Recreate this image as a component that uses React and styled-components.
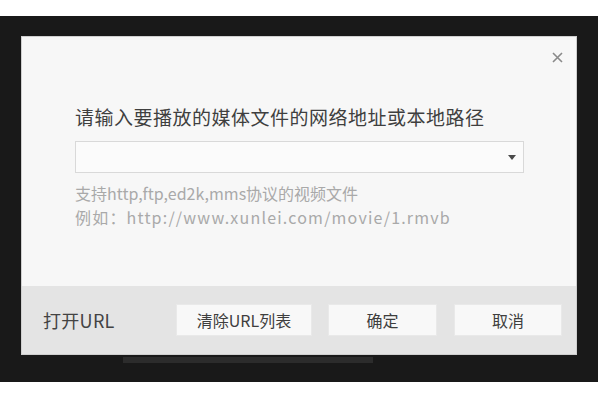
import React from "react";
import styled, { createGlobalStyle } from "styled-components";

const Global = createGlobalStyle`
  html, body { margin: 0; padding: 0; background: #ffffff; }
  body { font-family: "Noto Sans CJK SC", "Noto Sans", sans-serif; }
`;

const Page = styled.div`
  width: 600px;
  height: 400px;
  padding-top: 16px;
  box-sizing: border-box;
`;

const Frame = styled.div`
  width: 598px;
  height: 366px;
  background: #191919;
  box-sizing: border-box;
  padding: 20px 0 0 21px;
  display: flex;
  flex-direction: column;
`;

const Dialog = styled.div`
  width: 556px;
  height: 319px;
  background: #f7f7f7;
  border: 1px solid #cfcfcf;
  box-sizing: border-box;
  display: flex;
  flex-direction: column;
`;

const Body = styled.div`
  flex: 1;
  display: flex;
  flex-direction: column;
  padding: 0 52px 0 53px;
  position: relative;
`;

const Close = styled.button`
  position: absolute;
  top: 14px;
  right: 13px;
  width: 12px;
  height: 12px;
  padding: 0;
  border: 0;
  background: none;
  display: flex;
  align-items: center;
  justify-content: center;
`;

const Title = styled.div`
  margin-top: 67px;
  font-size: 19px;
  letter-spacing: 0.5px;
  line-height: 26px;
  color: #3f3f3f;
  white-space: nowrap;
`;

const Combo = styled.div`
  margin-top: 11px;
  height: 32px;
  background: #fbfbfb;
  border: 1px solid #d9d9d9;
  box-sizing: border-box;
  display: flex;
  align-items: center;
  justify-content: flex-end;
  padding-right: 7px;
`;

const Hints = styled.div`
  margin-top: 8px;
  font-size: 16px;
  line-height: 24px;
  color: #a9a9a9;
  white-space: nowrap;
`;

const HintLine = styled.div`
  letter-spacing: ${(p) => p.$ls || "0px"};
`;

const Footer = styled.div`
  height: 68px;
  background: #e4e4e4;
  display: flex;
  align-items: center;
  padding: 0 14px 0 21px;
  box-sizing: border-box;
`;

const Label = styled.div`
  font-size: 18px;
  color: #434343;
  flex: 1;
  letter-spacing: 0.3px;
`;

const Button = styled.button`
  width: ${(p) => p.$w}px;
  height: 32px;
  margin-left: ${(p) => p.$ml}px;
  background: #f8f8f8;
  border: 1px solid #e9e9e9;
  font-family: "Noto Sans CJK SC", "Noto Sans", sans-serif;
  font-size: 16px;
  color: #3e3e3e;
  padding: 0;
`;

const Taskbar = styled.div`
  width: 250px;
  height: 6px;
  margin: 2px 0 0 102px;
  background: #2c2c2c;
`;

export default function App() {
  return (
    <>
      <Global />
      <Page>
        <Frame>
          <Dialog>
            <Body>
              <Close aria-label="close">
                <svg width="11" height="11" viewBox="0 0 11 11">
                  <path d="M1 1 L10 10 M10 1 L1 10" stroke="#8a8a8a" strokeWidth="1.6" />
                </svg>
              </Close>
              <Title>请输入要播放的媒体文件的网络地址或本地路径</Title>
              <Combo>
                <svg width="8" height="5" viewBox="0 0 8 5">
                  <path d="M0 0 L8 0 L4 5 Z" fill="#4a4a4a" />
                </svg>
              </Combo>
              <Hints>
                <HintLine $ls="0px">支持http,ftp,ed2k,mms协议的视频文件</HintLine>
                <HintLine $ls="1.2px">例如：http://www.xunlei.com/movie/1.rmvb</HintLine>
              </Hints>
            </Body>
            <Footer>
              <Label>打开URL</Label>
              <Button $w={136} $ml={0}>清除URL列表</Button>
              <Button $w={109} $ml={16}>确定</Button>
              <Button $w={108} $ml={17}>取消</Button>
            </Footer>
          </Dialog>
          <Taskbar />
        </Frame>
      </Page>
    </>
  );
}
